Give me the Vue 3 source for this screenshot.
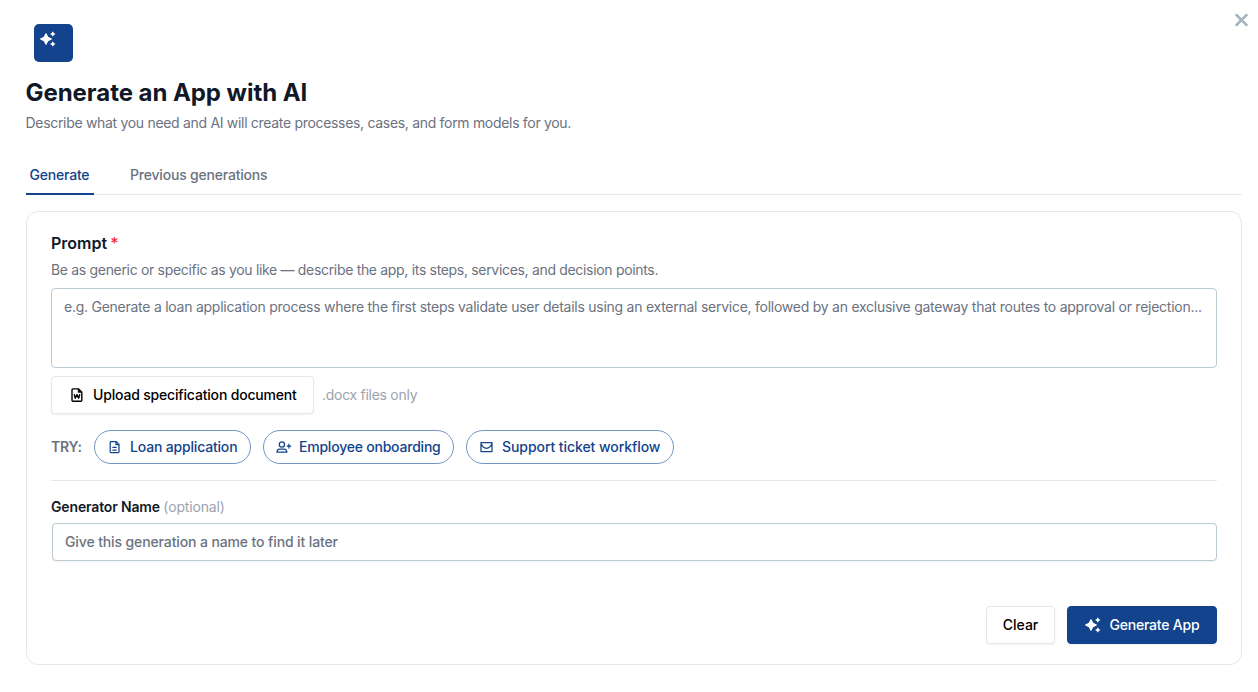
<template>
  <div class="dialog">
    <button class="close" aria-label="Close">
      <svg viewBox="0 0 14 14" width="14" height="14">
        <path d="M2.5 2l10 10M12.5 2l-10 10" fill="none" stroke="currentColor" stroke-width="2.5" stroke-linecap="round" />
      </svg>
    </button>

    <div class="logo">
      <svg viewBox="0 0 16 16" width="16" height="16" fill="currentColor">
        <path :d="sparkles" />
      </svg>
    </div>
    <h1>Generate an App with AI</h1>
    <p class="subtitle">Describe what you need and AI will create processes, cases, and form models for you.</p>

    <div class="tabs">
      <button
        v-for="tab in tabs"
        :key="tab.id"
        class="tab"
        :class="[tab.id, { active: activeTab === tab.id }]"
        @click="activeTab = tab.id"
      >
        <span>{{ tab.label }}</span>
      </button>
    </div>

    <div class="card">
      <label class="prompt-label" for="prompt">Prompt <span class="required">*</span></label>
      <p class="hint">Be as generic or specific as you like — describe the app, its steps, services, and decision points.</p>
      <textarea
        id="prompt"
        v-model="prompt"
        placeholder="e.g. Generate a loan application process where the first steps validate user details using an external service, followed by an exclusive gateway that routes to approval or rejection..."
      ></textarea>

      <div class="upload-row">
        <button class="btn upload">
          <svg viewBox="0 0 16 16" width="16" height="16" fill="none" stroke="currentColor" stroke-width="1.4" stroke-linejoin="round">
            <path d="M9.6 1.9H4a1 1 0 0 0-1 1v10.4a1 1 0 0 0 1 1h7.8a1 1 0 0 0 1-1V5.2z" />
            <path d="M9.2 1.9v3.5h3.6z" fill="currentColor" stroke-width=".6" />
            <path d="M5.2 7.2l1 4L8 7.6l1.6 3.6 1.2-4" stroke-width="1.4" />
          </svg>
          <span>Upload specification document</span>
        </button>
        <span class="file-note">.docx files only</span>
      </div>

      <div class="try-row">
        <span class="try">TRY:</span>
        <button
          v-for="item in examples"
          :key="item.id"
          class="chip"
          :class="item.id"
          @click="prompt = item.label"
        >
          <svg viewBox="0 0 16 16" width="16" height="16" fill="none" stroke="currentColor" stroke-width="1.25" stroke-linejoin="round">
            <path :d="item.icon" />
          </svg>
          <span>{{ item.label }}</span>
        </button>
      </div>

      <label class="name-label" for="name"><span>Generator Name</span> <em>(optional)</em></label>
      <input id="name" v-model="name" placeholder="Give this generation a name to find it later" />

      <div class="actions">
        <button class="btn clear" @click="clear"><span>Clear</span></button>
        <button class="btn primary">
          <svg viewBox="0 0 16 16" width="16" height="16" fill="currentColor">
            <path :d="sparkles" />
          </svg>
          <span>Generate App</span>
        </button>
      </div>
    </div>
  </div>
</template>

<script setup>
import { ref } from "vue";

const activeTab = ref("generate");
const prompt = ref("");
const name = ref("");

const tabs = [
  { id: "generate", label: "Generate" },
  { id: "previous", label: "Previous generations" },
];

const sparkles =
  "M5.5 2.4Q6 1.6 6.5 2.4L8.2 5.8L11.6 7.5Q12.4 8 11.6 8.5L8.2 10.2L6.5 13.6Q6 14.4 5.5 13.6L3.8 10.2L.4 8.5Q-.4 8 .4 7.5L3.8 5.8Z" +
  "M12.8 .2L13.8 2L15.6 3L13.8 4L12.8 5.8L11.8 4L10 3L11.8 2Z" +
  "M12.8 10.2L13.8 12L15.6 13L13.8 14L12.8 15.8L11.8 14L10 13L11.8 12Z";

const examples = [
  {
    id: "loan",
    label: "Loan application",
    icon: "M9.3 2.6H4a.8.8 0 0 0-.8.8v9.4a.8.8 0 0 0 .8.8h7.2a.8.8 0 0 0 .8-.8V5.4zM9 2.6v3h3M5.4 8.4h4.2M5.4 11h4.2",
  },
  {
    id: "employee",
    label: "Employee onboarding",
    icon: "M5.9 2.8a2.6 2.6 0 1 1 0 5.2a2.6 2.6 0 1 1 0-5.2M1 13.2c0-2.1 1.4-3 2.8-3H8c1.5 0 2.8.9 2.8 3zM12.9 4.8v4.6M10.6 7.1h4.6",
  },
  {
    id: "support",
    label: "Support ticket workflow",
    icon: "M2 3.7h11v8.8H2zM2 4.6c1.2 2.9 3.3 4.7 5.5 4.7s4.3-1.8 5.5-4.7",
  },
];

const clear = () => {
  prompt.value = "";
  name.value = "";
};
</script>

<style>
body {
  background: #fff;
}
</style>

<style scoped>
* {
  box-sizing: border-box;
}

.dialog {
  position: relative;
  height: 692px;
  padding: 24px 16px 0 26px;
  font-family: Inter, "Liberation Sans", sans-serif;
  font-size: 14px;
  line-height: 20px;
  color: #111827;
}

button,
input,
textarea {
  font: inherit;
}

button {
  display: flex;
  align-items: center;
  padding: 0;
  border: none;
  background: none;
  font-weight: 500;
  letter-spacing: -0.18px;
  white-space: nowrap;
  cursor: pointer;
}

svg {
  display: block;
  flex: none;
}

.close {
  position: absolute;
  top: 13px;
  right: 10px;
  color: #a5b6bf;
}

.logo {
  width: 39px;
  height: 38px;
  margin-left: 8px;
  padding: 7px 6px;
  border-radius: 5px;
  background: #12438c;
  color: #fff;
}

h1 {
  margin: 15px 0 0 -0.5px;
  font-size: 24px;
  line-height: 32px;
  font-weight: 700;
  letter-spacing: -0.05px;
}

.subtitle {
  margin: 4px 0 0 -0.5px;
  color: #6b7280;
  letter-spacing: -0.31px;
}

.tabs {
  display: flex;
  gap: 32px;
  height: 38px;
  margin-top: 24px;
  border-bottom: 1px solid #e5e7eb;
}

.tab {
  height: 38px;
  padding: 0 4px;
  border-bottom: 2px solid transparent;
  color: #6b7280;
  letter-spacing: -0.2px;
}

.tab.generate {
  width: 68px;
  padding-left: 3.5px;
}

.tab.active {
  border-color: #12438c;
  color: #12438c;
}

.card {
  display: flex;
  flex-direction: column;
  height: 454px;
  margin-top: 16px;
  padding: 19px 24px 20px;
  border: 1px solid #e5e7eb;
  border-radius: 12px;
}

.prompt-label {
  font-size: 16px;
  line-height: 24px;
  font-weight: 600;
}

.required {
  margin-left: -1px;
  color: #fb2c36;
  font-weight: 500;
}

.hint {
  margin: 5px 0 0;
  color: #6b7280;
  letter-spacing: -0.32px;
}

textarea,
input {
  border: 1px solid #bccad3;
  border-radius: 4px;
  background: #fff;
  outline: none;
  color: #111827;
}

textarea {
  flex: none;
  height: 80px;
  margin-top: 8px;
  padding: 8px 12px;
  resize: none;
  overflow: hidden;
  letter-spacing: -0.255px;
  white-space: nowrap;
}

textarea::placeholder,
input::placeholder {
  color: #6b7280;
  opacity: 1;
}

.upload-row {
  display: flex;
  align-items: center;
  gap: 8px;
  margin-top: 8px;
}

.btn {
  height: 38px;
  border: 1px solid #e5e7eb;
  border-radius: 4px;
  background: #fff;
  color: #000;
  box-shadow: 0 1px 2px rgba(0, 0, 0, 0.06);
}

.upload {
  width: 263px;
  padding-left: 17px;
  gap: 8px;
}

.file-note {
  color: #9ca3af;
  letter-spacing: -0.28px;
}

.try-row {
  display: flex;
  align-items: center;
  height: 67px;
  padding-bottom: 1px;
  border-bottom: 1px solid #e5e7eb;
}

.try {
  width: 43px;
  color: #6b7280;
  font-weight: 600;
  letter-spacing: -0.2px;
}

.chip {
  height: 34px;
  margin-right: 12px;
  padding-left: 12px;
  gap: 7px;
  border: 1px solid #7396c2;
  border-radius: 17px;
  color: #12438c;
}

.chip.loan {
  width: 157px;
}

.chip.employee {
  width: 191px;
  letter-spacing: -0.22px;
}

.chip.support {
  width: 208px;
  letter-spacing: -0.07px;
}

.name-label {
  margin-top: 16px;
  font-weight: 600;
  letter-spacing: -0.15px;
}

.name-label em {
  color: #9ca3af;
  font-style: normal;
  font-weight: 400;
}

input {
  height: 38px;
  margin: 6px 0 0 1px;
  padding: 0 12px 2px;
  font-weight: 500;
  letter-spacing: -0.12px;
  box-shadow: 0 1px 2px rgba(0, 0, 0, 0.05);
}

.actions {
  display: flex;
  justify-content: flex-end;
  gap: 12px;
  margin-top: auto;
}

.clear {
  width: 69px;
  justify-content: center;
  letter-spacing: 0;
}

.primary {
  width: 150px;
  padding-left: 17px;
  gap: 8.5px;
  border-color: #12438c;
  background: #12438c;
  color: #fff;
  letter-spacing: -0.22px;
}
</style>
